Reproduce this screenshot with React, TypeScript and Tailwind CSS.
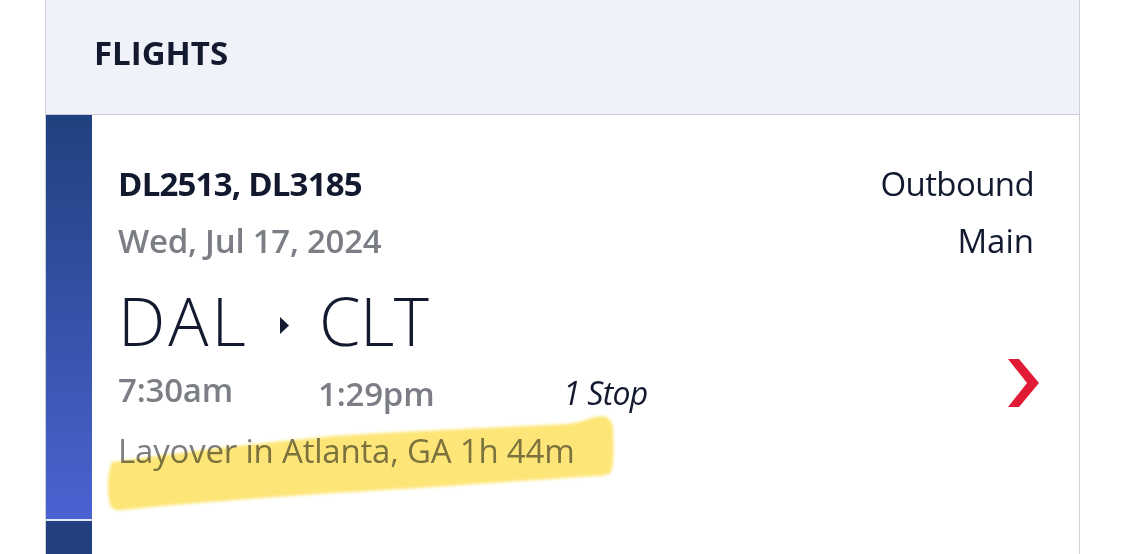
import React from 'react'

const ink = 'text-[#131a2f]'

function Chevron() {
  return (
    <svg viewBox="0 0 31 48" className="h-[48px] w-[31px]">
      <path d="M0 0h11l20 24-20 24H0l19-24z" fill="#e01a35" />
    </svg>
  )
}

function Highlight() {
  return (
    <svg
      className="pointer-events-none absolute left-[106px] top-[412px] mix-blend-multiply"
      width="510"
      height="104"
      viewBox="0 0 510 104"
    >
      <defs>
        <filter id="soft">
          <feGaussianBlur stdDeviation="1.6" />
        </filter>
      </defs>
      <path
        d="M6 50 C80 40 160 30 227 24 C320 18 400 15 461 12 C478 10 488 4 496 4 C504 5 507 10 507 18 C508 32 508 46 506 58 C504 63 498 64 490 64 C400 70 320 76 227 81 C150 86 80 92 16 98 C8 99 4 96 3 88 C1 76 2 60 6 50 Z"
        fill="#fde46c"
        opacity="0.92"
        filter="url(#soft)"
      />
    </svg>
  )
}

export default function App() {
  return (
    <div
      className="relative h-[554px] w-[1125px] overflow-hidden bg-white"
      style={{ fontFamily: '"Open Sans", "Noto Sans", sans-serif' }}
    >
      <div className="ml-[45px] flex h-full w-[1035px] flex-col border-x border-[#cdd0d6]">
        <div className="h-[115px] shrink-0 border-b border-[#c9ccd3] bg-[#eff2f8] pl-[48px] pt-[30px]">
          <div className={`text-[33px] font-bold leading-[45px] ${ink}`}>FLIGHTS</div>
        </div>

        <div className="flex h-[404px] shrink-0">
          <div className="w-[46px] shrink-0 bg-gradient-to-b from-[#21407f] to-[#4b63d2]" />
          <div className="flex flex-1 justify-between pl-[26px] pr-[45px] pt-[46px]">
            <div className="flex flex-col">
              <div className={`text-[33px] font-bold leading-[45px] tracking-[-0.8px] ${ink}`}>DL2513, DL3185</div>
              <div className="mt-[12px] text-[33px] font-semibold leading-[45px] tracking-[-0.25px] text-[#7b7e84]">
                Wed, Jul 17, 2024
              </div>
              <div className={`mt-[21px] flex items-center text-[67px] font-light leading-[72px] ${ink}`}>
                <span className="tracking-[3px]">DAL</span>
                <svg viewBox="0 0 9 17" className="ml-[31px] mr-[30px] mt-[10px] h-[17px] w-[9px]">
                  <path d="M0 0l9 8.5-9 8.5z" fill="#131a2f" />
                </svg>
                <span className="tracking-[-0.5px]">CLT</span>
              </div>
              <div className="mt-[11px] flex items-baseline text-[33px] font-semibold leading-[45px] tracking-[-0.2px] text-[#7b7e84]">
                <span className="w-[200px]">7:30am</span>
                <span className="w-[245px] translate-y-[4px]">1:29pm</span>
                <span className={`translate-y-[3px] text-[32px] font-normal italic tracking-[-0.8px] ${ink}`}>1 Stop</span>
              </div>
              <div className="mt-[16px] text-[33px] leading-[45px] tracking-[-0.2px] text-[#7c7e82]">
                Layover in Atlanta, GA 1h 44m
              </div>
            </div>
            <div className="flex flex-col items-end">
              <div className={`text-[33px] leading-[45px] tracking-[-0.6px] ${ink}`}>Outbound</div>
              <div className={`mt-[12px] text-[33px] leading-[45px] ${ink}`}>Main</div>
              <div className="-mr-[5px] mt-[96px]">
                <Chevron />
              </div>
            </div>
          </div>
        </div>

        <div className="flex flex-1">
          <div className="w-[46px] shrink-0 border-t-2 border-[#e4e7f2] bg-[#22407f]" />
          <div className="flex-1" />
        </div>
      </div>
      <Highlight />
    </div>
  )
}
